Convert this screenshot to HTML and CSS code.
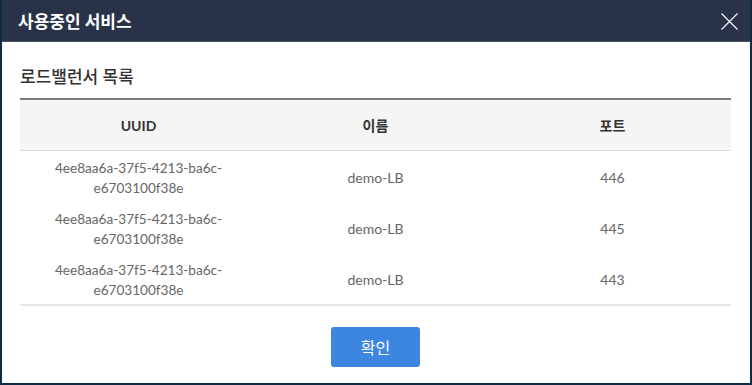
FILE: index.html
```html
<!DOCTYPE html>
<html lang="ko">
<head>
    <meta charset="UTF-8">
    <meta name="viewport" content="width=device-width, initial-scale=1.0">
    <title>사용중인 서비스</title>
    <link rel="stylesheet" href="styles.css">
</head>
<body>
    <div class="modal">
        <div class="modal-header">
            <h1 class="modal-title">사용중인 서비스</h1>
            <button class="close-btn" aria-label="닫기">
                <svg width="17" height="17" viewBox="0 0 17 17">
                    <path d="M0.5 0.5 L16.5 16.5 M16.5 0.5 L0.5 16.5" stroke="#ffffff" stroke-width="1.1" fill="none"/>
                </svg>
            </button>
        </div>
        <div class="modal-body">
            <h2 class="section-title">로드밸런서 목록</h2>
            <table class="lb-table">
                <thead>
                    <tr>
                        <th>UUID</th>
                        <th>이름</th>
                        <th>포트</th>
                    </tr>
                </thead>
                <tbody>
                    <tr>
                        <td class="uuid">4ee8aa6a-37f5-4213-ba6c-<br>e6703100f38e</td>
                        <td>demo-LB</td>
                        <td>446</td>
                    </tr>
                    <tr>
                        <td class="uuid">4ee8aa6a-37f5-4213-ba6c-<br>e6703100f38e</td>
                        <td>demo-LB</td>
                        <td>445</td>
                    </tr>
                    <tr>
                        <td class="uuid">4ee8aa6a-37f5-4213-ba6c-<br>e6703100f38e</td>
                        <td>demo-LB</td>
                        <td>443</td>
                    </tr>
                </tbody>
            </table>
            <div class="modal-footer">
                <button class="confirm-btn">확인</button>
            </div>
        </div>
    </div>
</body>
</html>
```

FILE: styles.css
```css
body {
    margin: 0;
    background-color: #0f2b44;
    font-family: Lato, 'Noto Sans CJK KR', sans-serif;
}

.modal {
    width: 752px;
    height: 385px;
    box-sizing: border-box;
    border: 2px solid #0f2b44;
    border-top: none;
    background-color: white;
    overflow: hidden;
}

.modal-header {
    display: flex;
    justify-content: space-between;
    align-items: center;
    height: 42px;
    box-sizing: border-box;
    padding: 0 12px 0 16px;
    background-color: #283349;
    border-bottom: 1px solid #4b5467;
}

.modal-title {
    margin: 0;
    font-size: 17px;
    font-weight: 700;
    color: white;
}

.close-btn {
    border: none;
    background: none;
    padding: 0;
    width: 17px;
    height: 17px;
    cursor: pointer;
    margin-top: 2px;
}

.close-btn svg {
    display: block;
}

.modal-body {
    padding: 22px 19px 0 18px;
}

.section-title {
    margin: 0 0 8px;
    font-size: 17px;
    line-height: 26px;
    font-weight: 500;
    color: #333;
}

.lb-table {
    width: 100%;
    border-collapse: collapse;
    table-layout: fixed;
    border-top: 2px solid #7b7b7b;
    border-bottom: 2px solid #e6e6e6;
}

.lb-table th {
    height: 50px;
    padding: 0;
    background-color: #f5f5f5;
    border-bottom: 1px solid #dcdcdc;
    font-size: 14px;
    font-weight: 700;
    color: #333;
    text-align: center;
}

.lb-table td {
    height: 40px;
    padding: 7px 10px 4px;
    font-size: 14px;
    line-height: 20px;
    color: #666;
    text-align: center;
}

.lb-table td.uuid {
    font-size: 13.6px;
}

.modal-footer {
    display: flex;
    justify-content: center;
    padding-top: 21px;
}

.confirm-btn {
    width: 89px;
    height: 40px;
    border: none;
    border-radius: 3px;
    background-color: #3c86e1;
    color: white;
    font-family: Lato, 'Noto Sans CJK KR', sans-serif;
    font-size: 16px;
    cursor: pointer;
}

.confirm-btn:hover {
    background-color: #2f76cf;
}
```
